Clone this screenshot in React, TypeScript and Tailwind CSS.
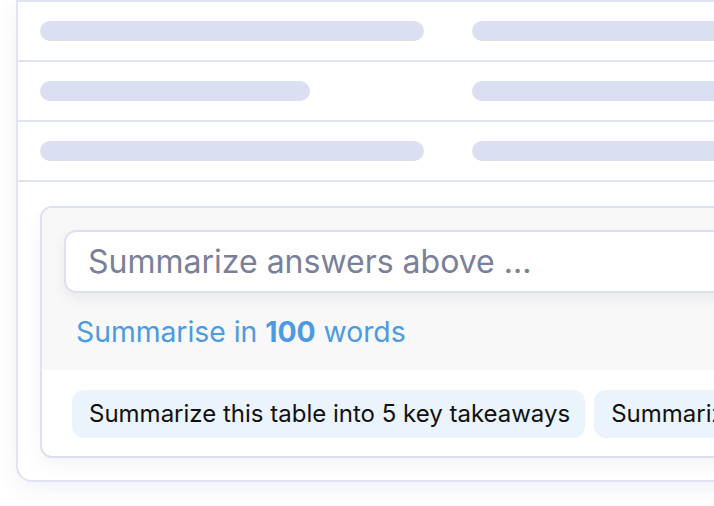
const rows = [
  { left: "w-[384px]", right: "w-[384px]" },
  { left: "w-[270px]", right: "w-[384px]" },
  { left: "w-[384px]", right: "w-[384px]" },
];

const prompts = [
  "Summarize this table into 5 key takeaways",
  "Summarize the main themes",
];

function SkeletonRow({ left, right }: { left: string; right: string }) {
  return (
    <div className="flex h-[60px] items-center gap-[48px] border-t-2 border-[#e0e3f3] pl-[22px]">
      <div className="w-[384px]">
        <div className={`h-[20px] rounded-full bg-[#dadff1] ${left}`} />
      </div>
      <div className={`h-[20px] shrink-0 rounded-full bg-[#dadff1] ${right}`} />
    </div>
  );
}

export default function App() {
  return (
    <div
      className="h-[506px] w-[714px] overflow-hidden bg-white"
      style={{ fontFamily: "Inter, 'Noto Sans', sans-serif" }}
    >
      <div className="ml-[16px] w-[1000px] rounded-b-2xl border-x-2 border-b-2 border-[#e0e3f3] bg-white pb-[22px] shadow-[0_6px_24px_rgba(40,50,110,0.07)]">
        {rows.map((r, i) => (
          <SkeletonRow key={i} left={r.left} right={r.right} />
        ))}
        <div className="border-t-2 border-[#e0e3f3] pl-[22px] pt-[24px]">
          <div className="w-[960px] overflow-hidden rounded-xl border-2 border-[#dde0f2] bg-white shadow-[0_6px_18px_rgba(0,0,0,0.05)]">
            <div className="bg-[#f8f8f8] px-[22px] pb-[20px] pt-[22px]">
              <div className="flex h-[63px] items-center rounded-xl border-2 border-[#dde0f2] bg-white px-[22px] text-[32px] text-[#7b8099] shadow-[0_6px_14px_rgba(0,0,0,0.06)]">
                Summarize answers above ...
              </div>
              <div className="mt-[21px] h-[36px] pl-[12px] text-[28.3px] leading-[36px] text-[#4a9be3]">
                Summarise in <span className="font-bold">100</span> words
              </div>
            </div>
            <div className="flex gap-[9px] px-[30px] pb-[18px] pt-[20px]">
              {prompts.map((p) => (
                <div
                  key={p}
                  className="flex h-[48px] shrink-0 items-center rounded-xl bg-[#ebf3fc] pl-[17px] pr-[15px] text-[24px] text-[#111]"
                >
                  {p}
                </div>
              ))}
            </div>
          </div>
        </div>
      </div>
    </div>
  );
}
